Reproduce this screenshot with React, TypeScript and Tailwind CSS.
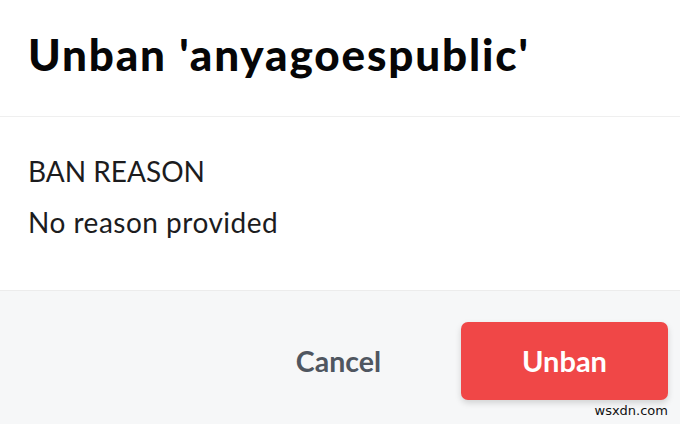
export default function App() {
  return (
    <div className="w-[680px] h-[424px] flex flex-col bg-white overflow-hidden" style={{ fontFamily: "Lato, 'Noto Sans', sans-serif" }}>
      <div className="h-[117px] shrink-0 px-[28px] pt-[32px] border-b border-[#efefef]">
        <h1 className="text-[44px] font-black text-[#060607] leading-none tracking-[1.85px]">Unban 'anyagoespublic'</h1>
      </div>
      <div className="h-[173px] shrink-0 flex flex-col px-[28px] pt-[37px] text-[#1c1c1e]">
        <div className="text-[28px] leading-[34px]">BAN REASON</div>
        <div className="text-[28px] leading-[34px] mt-[17px] tracking-[0.5px]">No reason provided</div>
      </div>
      <div className="flex-1 relative bg-[#f6f7f8] border-t border-[#ececec] flex items-start justify-end gap-[80px] pt-[31px] pr-[12px]">
        <button className="h-[78px] text-[28.5px] font-bold text-[#4f5660]">Cancel</button>
        <button className="w-[207px] h-[78px] rounded-[7px] bg-[#f04747] text-white text-[29px] font-bold shadow-[0_3px_6px_rgba(0,0,0,0.15)]">Unban</button>
        <span className="absolute right-[12px] bottom-[4px] text-[13px] text-[#111]" style={{ fontFamily: "'DejaVu Sans', sans-serif" }}>wsxdn.com</span>
      </div>
    </div>
  );
}
